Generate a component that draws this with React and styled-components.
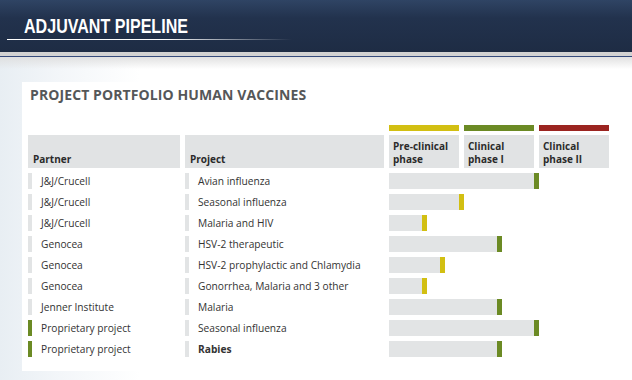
import React from "react";
import styled, { createGlobalStyle } from "styled-components";

const Global = createGlobalStyle`
  html, body { margin: 0; padding: 0; background: #fff; }
  body { font-family: "Open Sans", "Noto Sans", sans-serif; }
`;

const Page = styled.div`
  width: 632px;
  height: 380px;
  overflow: hidden;
  display: flex;
  flex-direction: column;
  background: #fff;
`;

const Header = styled.header`
  height: 52px;
  flex: none;
  background: linear-gradient(180deg, #2f4464 0%, #22324d 35%, #1e2c44 100%);
  padding: 15px 0 0 7px;
  box-sizing: border-box;
`;

const Title = styled.h1`
  margin: 0 0 0 17px;
  font-family: "Liberation Sans", Arial, sans-serif;
  font-weight: 700;
  font-size: 21px;
  line-height: 22px;
  color: #fff;
  transform: scaleX(0.765);
  transform-origin: left center;
  white-space: nowrap;
`;

const TitleRule = styled.div`
  margin-top: 2px;
  width: 285px;
  height: 1px;
  background: linear-gradient(90deg, #fff 0%, #fff 55%, rgba(255,255,255,0) 100%);
`;

const Band = styled.div`
  flex: none;
  height: 4px;
  background: #d2d2d2;
  border-bottom: 1px solid #364b7c;
`;

const Content = styled.main`
  flex: 1;
  padding: 25px 0 0 22px;
  background:
    linear-gradient(180deg, rgba(222,222,222,0.9) 0px, rgba(255,255,255,0) 12px),
    linear-gradient(90deg, #e8eef3 0px, #f3f6f9 60px, #ffffff 140px);
`;

const Card = styled.section`
  width: 598px;
  background: #fff;
  padding: 3px 0 14px 6px;
  box-sizing: border-box;
`;

const CardTitle = styled.h2`
  margin: 0 0 20px 2px;
  font-family: "Open Sans", sans-serif;
  font-weight: 700;
  font-size: 14px;
  line-height: 20px;
  color: #555759;
  letter-spacing: 0.1px;
`;

const Grid = styled.div`
  display: grid;
  grid-template-columns: 152px 199px 70px 70px 70px;
  column-gap: 5px;
`;

const PhaseRow = styled(Grid)`
  margin-bottom: 4px;
`;

const PhaseBar = styled.div`
  grid-column: ${(p) => p.$col};
  height: 6px;
  background: ${(p) => p.$color};
`;

const HeadRow = styled(Grid)`
  margin-bottom: 5px;
`;

const HeadCell = styled.div`
  height: 33px;
  background: #e1e3e4;
  box-sizing: border-box;
  padding: 0 4px 3px ${(p) => p.$pl || 4}px;
  display: flex;
  align-items: flex-end;
  font-weight: 700;
  font-size: 10px;
  line-height: 12.5px;
  color: #2b2b2b;
`;

const Rows = styled.div`
  display: flex;
  flex-direction: column;
  gap: 5px;
`;

const Row = styled(Grid)`
  height: 16px;
  align-items: center;
`;

const LabelCell = styled.div`
  display: flex;
  align-items: center;
  height: 16px;
  gap: 9px;
  font-size: 10.2px;
  color: #333;
  white-space: nowrap;
  font-weight: ${(p) => (p.$bold ? 700 : 400)};
`;

const Marker = styled.span`
  flex: none;
  width: 4px;
  height: 16px;
  background: ${(p) => p.$color || "#e2e4e5"};
`;

const BarCell = styled.div`
  grid-column: 3 / span 3;
  height: 16px;
`;

const Bar = styled.div`
  height: 16px;
  background: #e2e4e5;
  border-right: 5px solid ${(p) => p.$color};
  box-sizing: border-box;
`;

const YELLOW = "#d2bf12";
const GREEN = "#6b8a24";
const RED = "#9b2420";

const data = [
  ["J&J/Crucell", "Avian influenza", 150, GREEN],
  ["J&J/Crucell", "Seasonal influenza", 75, YELLOW],
  ["J&J/Crucell", "Malaria and HIV", 38, YELLOW],
  ["Genocea", "HSV-2 therapeutic", 113, GREEN],
  ["Genocea", "HSV-2 prophylactic and Chlamydia", 56, YELLOW],
  ["Genocea", "Gonorrhea, Malaria and 3 other", 38, YELLOW],
  ["Jenner Institute", "Malaria", 113, GREEN],
  ["Proprietary project", "Seasonal influenza", 150, GREEN, true],
  ["Proprietary project", "Rabies", 113, GREEN, true, true],
];

export default function App() {
  return (
    <Page>
      <Global />
      <Header>
        <Title>ADJUVANT PIPELINE</Title>
        <TitleRule />
      </Header>
      <Band />
      <Content>
        <Card>
          <CardTitle>PROJECT PORTFOLIO HUMAN VACCINES</CardTitle>
          <PhaseRow>
            <PhaseBar $col={3} $color={YELLOW} />
            <PhaseBar $col={4} $color={GREEN} />
            <PhaseBar $col={5} $color={RED} />
          </PhaseRow>
          <HeadRow>
            <HeadCell $pl={5}>Partner</HeadCell>
            <HeadCell $pl={5}>Project</HeadCell>
            <HeadCell>Pre-clinical<br />phase</HeadCell>
            <HeadCell>Clinical<br />phase I</HeadCell>
            <HeadCell>Clinical<br />phase II</HeadCell>
          </HeadRow>
          <Rows>
            {data.map(([partner, project, w, color, own, bold], i) => (
              <Row key={i}>
                <LabelCell>
                  <Marker $color={own ? GREEN : undefined} />
                  {partner}
                </LabelCell>
                <LabelCell $bold={bold}>
                  <Marker />
                  {project}
                </LabelCell>
                <BarCell>
                  <Bar $color={color} style={{ width: w }} />
                </BarCell>
              </Row>
            ))}
          </Rows>
        </Card>
      </Content>
    </Page>
  );
}
